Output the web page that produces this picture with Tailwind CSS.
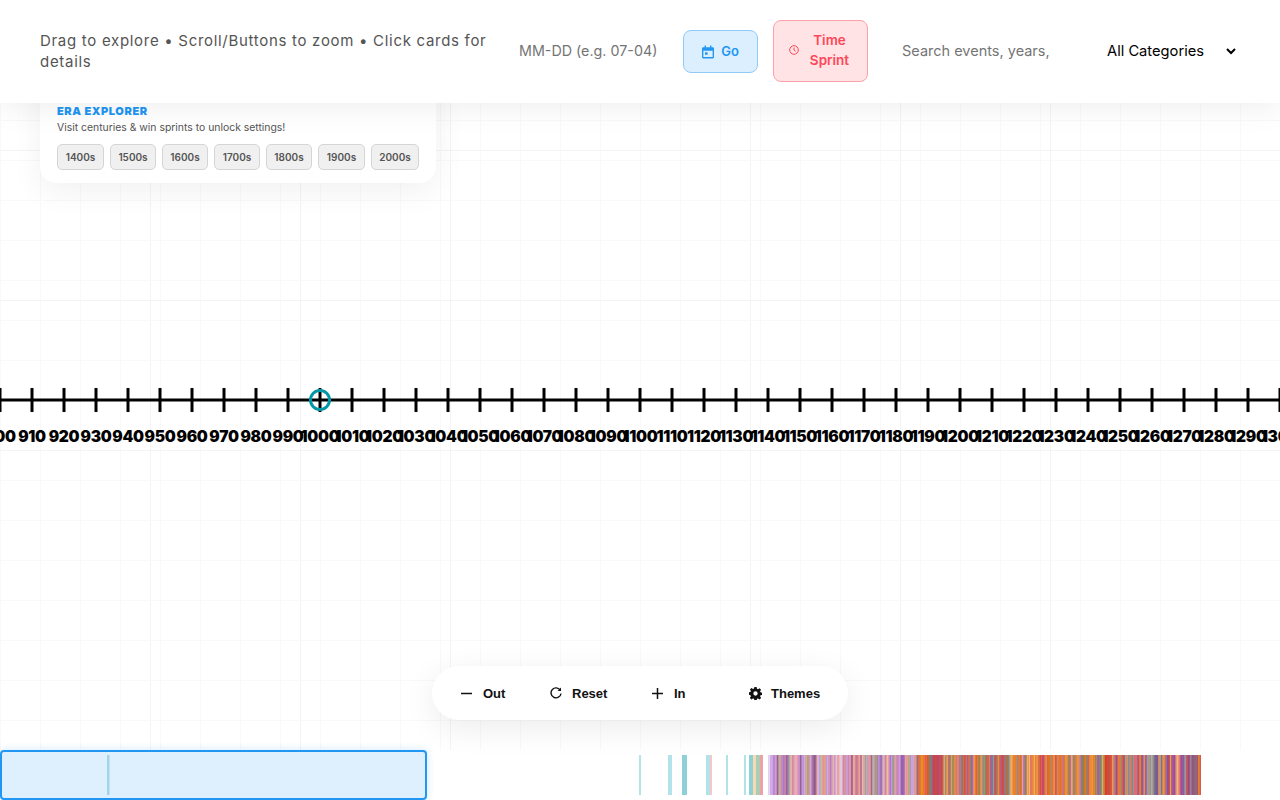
<!DOCTYPE html>
<html lang="en">
  <head>
    <meta charset="UTF-8" />
    <title>Timeline</title>
    <script src="https://cdn.jsdelivr.net/npm/@tailwindcss/browser@4"></script>
  </head>
  <body class="h-[800px] overflow-hidden bg-white font-['Inter',sans-serif] text-black">
    <div class="relative flex h-[800px] flex-col overflow-hidden">
      <!-- header -->
      <header class="relative z-30 flex h-[103px] shrink-0 items-center bg-white/97 pl-10 shadow-[0_4px_30px_rgba(0,0,0,0.07)]">
        <p class="mb-[2px] w-[479px] shrink-0 text-[15px] leading-[21px] tracking-[0.7px] text-[#555]">
          Drag to explore • Scroll/Buttons to zoom • Click cards for details
        </p>
        <input class="mb-[2px] w-[164px] shrink-0 text-[14.3px] text-[#555] outline-none placeholder:text-[#757575]" placeholder="MM-DD (e.g. 07-04)" />
        <button class="flex h-[43px] w-[75px] shrink-0 items-center justify-center gap-[7px] rounded-lg border border-[#90caf9] bg-[#dcefff] text-[13px] font-semibold text-[#2196f3]">
          <svg class="h-[14px] w-[12px]" viewBox="0 0 14 15" fill="currentColor"><path d="M3 0h1.600v2h4.800V0H11v2h1.500A1.500 1.500 0 0 1 14 3.500v10a1.500 1.500 0 0 1-1.500 1.500h-11A1.500 1.500 0 0 1 0 13.500v-10A1.500 1.500 0 0 1 1.500 2H3V0Zm-1.400 6v7.400h10.800V6H1.600Zm1.900 1.700h3v3h-3v-3Z" /></svg>
          Go
        </button>
        <button class="mb-[1px] ml-[15px] flex h-[62px] w-[95px] shrink-0 items-center justify-center gap-[11px] rounded-lg border border-[#ffa0a8] bg-[#ffe3e5] pr-[3px] pb-[2px] text-[13.5px] leading-5 font-semibold text-[#ff4757]">
          <svg class="h-[10px] w-[10px]" viewBox="0 0 10 10" fill="none" stroke="currentColor" stroke-width="1"><circle cx="5" cy="5" r="4.300" /><path d="M5 2.600V5l1.500 1.200" /></svg>
          <span class="text-center">Time<br />Sprint</span>
        </button>
        <input class="mb-[2px] ml-[34px] w-[193px] shrink-0 text-[14.5px] text-[#555] outline-none placeholder:text-[#757575]" placeholder="Search events, years," />
        <select class="mb-[1px] w-[144px] shrink-0 pl-[8px] text-[14.7px] text-black outline-none">
          <option>All Categories</option>
        </select>
      </header>

      <!-- timeline canvas -->
      <main class="relative flex-1 bg-[linear-gradient(#f9f9f9_1px,transparent_1px),linear-gradient(90deg,#f9f9f9_1px,transparent_1px),linear-gradient(#f4f4f4_1px,transparent_1px),linear-gradient(90deg,#f4f4f4_1px,transparent_1px)] bg-[size:40px_40px,40px_40px,150px_150px,150px_150px] bg-[position:0_-103px,0_-103px,0_-103px,0_-103px]">
        <!-- era card -->
        <section class="absolute top-[-43px] left-10 z-10 flex h-[123px] w-[396px] flex-col justify-end rounded-2xl bg-white px-[17px] pb-[13px] shadow-[0_8px_32px_rgba(0,0,0,0.06)]">
          <h2 class="text-[11px] leading-[14px] font-black tracking-[0.6px] text-[#2196f3]">ERA EXPLORER</h2>
          <p class="mt-[2px] text-[10.4px] leading-[16px] text-[#555]">Visit centuries &amp; win sprints to unlock settings!</p>
          <div class="mt-[8px] flex gap-[6px]">
            <button class="h-[26px] w-[47px] rounded-[5px] border border-[#d5d5d5] bg-[#f0f0f0] text-[10px] font-semibold text-[#555]">1400s</button>
            <button class="h-[26px] w-[46px] rounded-[5px] border border-[#d5d5d5] bg-[#f0f0f0] text-[10px] font-semibold text-[#555]">1500s</button>
            <button class="h-[26px] w-[46px] rounded-[5px] border border-[#d5d5d5] bg-[#f0f0f0] text-[10px] font-semibold text-[#555]">1600s</button>
            <button class="h-[26px] w-[46px] rounded-[5px] border border-[#d5d5d5] bg-[#f0f0f0] text-[10px] font-semibold text-[#555]">1700s</button>
            <button class="h-[26px] w-[46px] rounded-[5px] border border-[#d5d5d5] bg-[#f0f0f0] text-[10px] font-semibold text-[#555]">1800s</button>
            <button class="h-[26px] w-[47px] rounded-[5px] border border-[#d5d5d5] bg-[#f0f0f0] text-[10px] font-semibold text-[#555]">1900s</button>
            <button class="h-[26px] w-[48px] rounded-[5px] border border-[#d5d5d5] bg-[#f0f0f0] text-[10px] font-semibold text-[#555]">2000s</button>
          </div>
        </section>

        <!-- axis -->
        <svg id="axis" class="absolute top-[267px] left-0" width="1280" height="90" viewBox="0 267 1280 90">
          <g id="ticks"></g>
          <circle cx="320" cy="297" r="9.500" fill="none" stroke="#0097a7" stroke-width="3" />
        </svg>

        <!-- zoom controls -->
        <div class="absolute top-[563px] left-[432px] z-10 flex h-[54px] w-[416px] items-center rounded-full bg-white pl-[29px] font-['Liberation_Sans',sans-serif] text-[13px] font-bold text-[#111] shadow-[0_8px_32px_rgba(0,0,0,0.08)]">
          <button class="flex w-[89px] items-center gap-[11px]">
            <svg class="h-[11px] w-[11px]" viewBox="0 0 11 11" stroke="currentColor" stroke-width="1.500"><path d="M0 5.500h11" /></svg>
            <span class="pt-[2px]">Out</span>
          </button>
          <button class="flex w-[102px] items-center gap-[10px]">
            <svg class="h-[12px] w-[12px]" viewBox="0 0 12 12" fill="none" stroke="currentColor" stroke-width="1.400"><path d="M10.400 3.400A5 5 0 1 0 11 6.500" /><path d="M11 .6v3.400H7.600" fill="currentColor" stroke="none" /></svg>
            <span class="pt-[2px]">Reset</span>
          </button>
          <button class="flex w-[97px] items-center gap-[11px]">
            <svg class="h-[11px] w-[11px]" viewBox="0 0 11 11" stroke="currentColor" stroke-width="1.500"><path d="M0 5.500h11M5.500 0v11" /></svg>
            <span class="pt-[2px]">In</span>
          </button>
          <button class="flex items-center gap-[9px]">
            <svg class="h-[13px] w-[13px]" viewBox="0 0 24 24" fill="currentColor"><path fill-rule="evenodd" d="M10 0h4l.7 3.300 2 .8 2.800-1.800 2.800 2.800-1.800 2.800.8 2 3.300.7v4l-3.300.7-.8 2 1.800 2.800-2.800 2.800-2.800-1.800-2 .8-.7 3.300h-4l-.7-3.300-2-.8-2.800 1.800-2.800-2.800 1.800-2.800-.8-2L-.6 14v-4l3.300-.7.8-2-1.800-2.800 2.800-2.800 2.800 1.800 2-.8L10 0Zm2 8a4 4 0 1 0 0 8 4 4 0 0 0 0-8Z" /></svg>
            <span class="pt-[2px]">Themes</span>
          </button>
        </div>
      </main>

      <!-- minimap -->
      <footer class="relative h-[50px] shrink-0 bg-white">
        <svg id="bars" class="absolute top-[5px] left-0" width="1280" height="40" viewBox="0 0 1280 40"></svg>
        <div class="absolute inset-y-0 left-0 flex w-[427px] items-center rounded-[4px] border-2 border-[#2196f3] bg-[#2196f3]/15 shadow-[0_0_8px_rgba(33,150,243,0.2)]"></div>
      </footer>
    </div>

    <script>
      const svgNs = "http://www.w3.org/2000/svg";

      // axis ticks and year labels, 10 years per 32px
      const ticks = document.getElementById("ticks");
      const axisLine = document.createElementNS(svgNs, "rect");
      axisLine.setAttribute("x", 0);
      axisLine.setAttribute("y", 295.5);
      axisLine.setAttribute("width", 1280);
      axisLine.setAttribute("height", 3);
      ticks.appendChild(axisLine);
      for (let i = 0; i <= 40; i++) {
        const x = i * 32;
        const line = document.createElementNS(svgNs, "line");
        line.setAttribute("x1", x);
        line.setAttribute("x2", x);
        line.setAttribute("y1", 285);
        line.setAttribute("y2", 309);
        line.setAttribute("stroke", "#000");
        line.setAttribute("stroke-width", 3);
        ticks.appendChild(line);
        const label = document.createElementNS(svgNs, "text");
        label.setAttribute("x", x);
        label.setAttribute("y", 339);
        label.setAttribute("text-anchor", "middle");
        label.setAttribute("class", "text-[15.5px] font-black tracking-[-0.3px] fill-black");
        label.textContent = 900 + i * 10;
        ticks.appendChild(label);
      }

      // minimap event bars
      const bars = document.getElementById("bars");
      function addBar(x, w, color, opacity) {
        const r = document.createElementNS(svgNs, "rect");
        r.setAttribute("x", x);
        r.setAttribute("y", 0);
        r.setAttribute("width", w);
        r.setAttribute("height", 40);
        r.setAttribute("fill", color);
        r.setAttribute("opacity", opacity);
        bars.appendChild(r);
      }
      const sparse = [
        [107, 2.5, "#4fb3c8", 0.4], [639, 2, "#7fd0d8", 0.6], [668, 4, "#7fd0d8", 0.6],
        [682, 5, "#5cbcc8", 0.7], [706, 4, "#7fd0d8", 0.6], [710, 2, "#f0a0a8", 0.6],
        [726, 2, "#7fd0d8", 0.6], [744, 2, "#7fd0d8", 0.6], [749, 4, "#5cbcc8", 0.7],
        [753, 3, "#f8c890", 0.7], [756, 4, "#88b898", 0.7], [760, 3, "#e87878", 0.7],
      ];
      sparse.forEach((b) => addBar(b[0], b[1], b[2], b[3]));

      let seed = 42;
      function rnd() {
        seed = (seed * 16807) % 2147483647;
        return seed / 2147483647;
      }
      // dense part: thin overlapping bars, so the colours mix and darken
      const early = ["#9b59c0", "#e08a9a", "#e89060", "#b070d0", "#d0b0e8", "#809860", "#703a80", "#c86a90"];
      const middle = ["#e8701a", "#d8403c", "#a84a9a", "#e8701a", "#808050", "#e89030", "#c06040", "#708090"];
      const late = ["#d0424c", "#9040a0", "#e8801a", "#808090", "#d85050", "#705090", "#e07030", "#a09060"];
      let x = 768;
      while (x < 1200) {
        const palette = x < 915 ? early : x < 1110 ? middle : late;
        const w = 1.5 + rnd() * 3;
        addBar(x, Math.min(w, 1201 - x), palette[Math.floor(rnd() * palette.length)], x < 915 ? 0.6 : 0.75);
        x += 0.9 + rnd() * 1.2;
      }
      addBar(933, 9, "#d83838", 0.6);
      addBar(1105, 7, "#d83030", 0.6);
      addBar(1188, 10, "#7a4a88", 0.6);
    </script>
  </body>
</html>
